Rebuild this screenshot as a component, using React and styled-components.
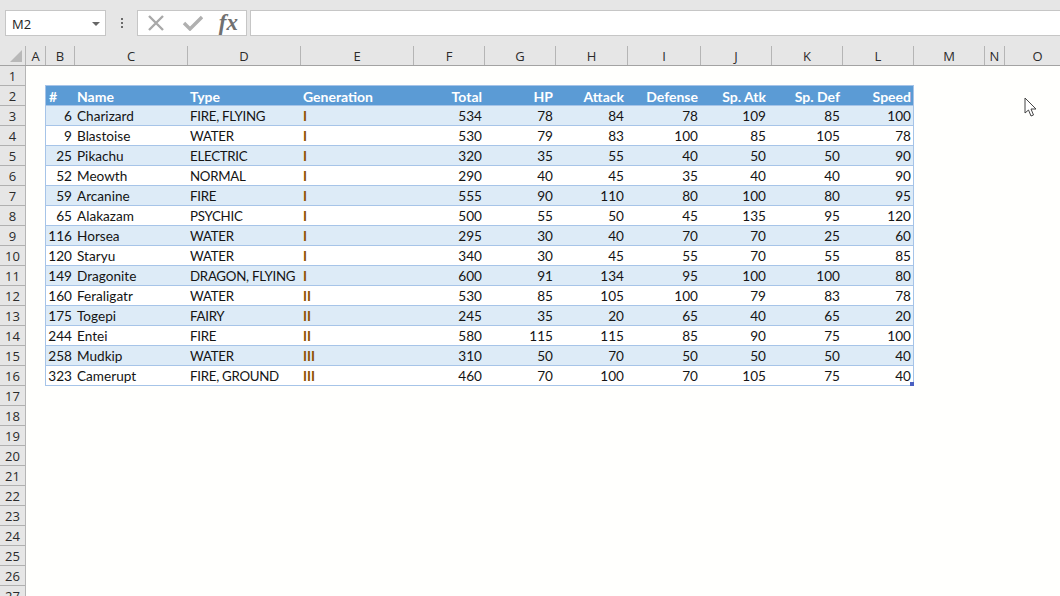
import React from 'react';
import styled, { createGlobalStyle } from 'styled-components';

const GlobalStyle = createGlobalStyle`
  html, body {
    margin: 0;
    padding: 0;
    height: 100%;
    overflow: hidden;
    background: #fffffd;
  }
`;

const COLUMNS = [
  { name: 'A', width: 20 },
  { name: 'B', width: 29 },
  { name: 'C', width: 113 },
  { name: 'D', width: 113 },
  { name: 'E', width: 113 },
  { name: 'F', width: 71 },
  { name: 'G', width: 71 },
  { name: 'H', width: 72 },
  { name: 'I', width: 73 },
  { name: 'J', width: 71 },
  { name: 'K', width: 71 },
  { name: 'L', width: 71 },
  { name: 'M', width: 71 },
  { name: 'N', width: 20 },
  { name: 'O', width: 66 },
];

const HEADERS = ['#', 'Name', 'Type', 'Generation', 'Total', 'HP', 'Attack', 'Defense', 'Sp. Atk', 'Sp. Def', 'Speed'];

const POKEMON = [
  [6, 'Charizard', 'FIRE, FLYING', 'I', 534, 78, 84, 78, 109, 85, 100],
  [9, 'Blastoise', 'WATER', 'I', 530, 79, 83, 100, 85, 105, 78],
  [25, 'Pikachu', 'ELECTRIC', 'I', 320, 35, 55, 40, 50, 50, 90],
  [52, 'Meowth', 'NORMAL', 'I', 290, 40, 45, 35, 40, 40, 90],
  [59, 'Arcanine', 'FIRE', 'I', 555, 90, 110, 80, 100, 80, 95],
  [65, 'Alakazam', 'PSYCHIC', 'I', 500, 55, 50, 45, 135, 95, 120],
  [116, 'Horsea', 'WATER', 'I', 295, 30, 40, 70, 70, 25, 60],
  [120, 'Staryu', 'WATER', 'I', 340, 30, 45, 55, 70, 55, 85],
  [149, 'Dragonite', 'DRAGON, FLYING', 'I', 600, 91, 134, 95, 100, 100, 80],
  [160, 'Feraligatr', 'WATER', 'II', 530, 85, 105, 100, 79, 83, 78],
  [175, 'Togepi', 'FAIRY', 'II', 245, 35, 20, 65, 40, 65, 20],
  [244, 'Entei', 'FIRE', 'II', 580, 115, 115, 85, 90, 75, 100],
  [258, 'Mudkip', 'WATER', 'III', 310, 50, 70, 50, 50, 50, 40],
  [323, 'Camerupt', 'FIRE, GROUND', 'III', 460, 70, 100, 70, 105, 75, 40],
];

// table cells don't sit exactly under the header strip in the capture
const TABLE_TEMPLATE = '28px 113px 113px 113px 71px 71px 71px 74px 68px 74px 71px';
const ROW_NUMBERS = Array.from({ length: 27 }, (_, i) => i + 1);

const Page = styled.div`
  width: 1060px;
  height: 596px;
  overflow: hidden;
  background: #fffffd;
  font-family: "Lato", "Liberation Sans", sans-serif;
`;

const FormulaBar = styled.div`
  height: 46px;
  box-sizing: border-box;
  padding: 10px 0 10px 5px;
  background: #e6e6e6;
  display: flex;
  align-items: stretch;
`;

const NameBox = styled.div`
  width: 101px;
  box-sizing: border-box;
  background: #fff;
  border: 1px solid #c6c6c6;
  display: flex;
  align-items: center;
  justify-content: space-between;
  padding: 1px 5px 0 6px;
  font-family: "Open Sans", sans-serif;
  font-size: 13px;
  color: #222;
`;

const Caret = styled.span`
  width: 0;
  height: 0;
  border-left: 4px solid transparent;
  border-right: 4px solid transparent;
  border-top: 4px solid #666;
`;

const Grip = styled.div`
  width: 31px;
  display: flex;
  flex-direction: column;
  align-items: center;
  justify-content: center;
  gap: 2px;
`;

const GripDot = styled.span`
  width: 2px;
  height: 2px;
  background: #6a6a6a;
`;

const ActionBox = styled.div`
  width: 110px;
  box-sizing: border-box;
  background: #fff;
  border: 1px solid #c6c6c6;
  display: flex;
  align-items: center;
  justify-content: space-between;
  padding: 0 8px 0 9px;
`;

const FxLabel = styled.span`
  font-family: "Liberation Serif", serif;
  font-style: italic;
  font-weight: 700;
  font-size: 23px;
  line-height: 1;
  color: #707070;
  position: relative;
  top: -1px;
`;

const FormulaInput = styled.div`
  flex: 1;
  margin-left: 3px;
  background: #fff;
  border: 1px solid #c6c6c6;
  border-right: none;
`;

const ColumnStrip = styled.div`
  display: flex;
  height: 20px;
  box-sizing: border-box;
  background: #e6e6e6;
  border-bottom: 1px solid #a3a3a3;
`;

const Corner = styled.div`
  width: 26px;
  flex: none;
  box-sizing: border-box;
  border-right: 1px solid #b5b5b5;
  display: flex;
  align-items: flex-end;
  justify-content: flex-end;
  padding: 0 3px 3px 0;
`;

const CornerMark = styled.span`
  width: 0;
  height: 0;
  border-left: 12px solid transparent;
  border-bottom: 12px solid #b8b8b8;
`;

const ColumnLabel = styled.div`
  flex: none;
  width: ${({ $width }) => $width}px;
  box-sizing: border-box;
  border-right: 1px solid #b5b5b5;
  text-align: center;
  font-family: "Open Sans", sans-serif;
  font-size: 13px;
  line-height: 21px;
  color: #2b2b2b;
`;

const SheetBody = styled.div`
  display: flex;
  align-items: flex-start;
`;

const RowStrip = styled.div`
  width: 26px;
  flex: none;
  box-sizing: border-box;
  background: #e6e6e6;
  border-right: 1px solid #b5b5b5;
`;

const RowLabel = styled.div`
  height: 20px;
  box-sizing: border-box;
  border-bottom: 1px solid #b0b0b0;
  text-align: center;
  font-family: "Open Sans", sans-serif;
  font-size: 13px;
  line-height: 21px;
  color: #2b2b2b;
`;

const Sheet = styled.div`
  flex: 1;
  padding: 19px 0 0 19px;
`;

const Table = styled.div`
  position: relative;
  width: 869px;
  box-sizing: border-box;
  border: 1px solid #a6c4e8;
  border-bottom: none;
`;

const TableRow = styled.div`
  display: grid;
  grid-template-columns: ${TABLE_TEMPLATE};
  height: 20px;
  box-sizing: border-box;
  align-items: start;
  background: ${({ $striped }) => ($striped ? '#ddebf7' : '#fff')};
  border-bottom: 1px solid #a6c4e8;
`;

const HeaderRow = styled(TableRow)`
  background: #5b9bd5;
`;

const Cell = styled.div`
  padding: 0 ${({ $right }) => ($right ? '2px' : '0')} 0 ${({ $right }) => ($right ? '0' : '3px')};
  text-align: ${({ $right }) => ($right ? 'right' : 'left')};
  font-size: 13.6px;
  line-height: 20px;
  white-space: nowrap;
  color: #141414;
`;

const HeaderCell = styled(Cell)`
  color: #fff;
  font-weight: 700;
  font-size: 14px;
  line-height: 21px;
`;

const TypeCell = styled(Cell)`
  font-size: 13.3px;
  letter-spacing: -0.28px;
`;

const GenerationCell = styled(Cell)`
  color: #8f4f00;
  font-weight: 700;
`;

const ResizeHandle = styled.span`
  position: absolute;
  right: -1px;
  bottom: 0;
  width: 4px;
  height: 4px;
  background: #4a5fc1;
`;

const Pointer = styled.svg`
  position: absolute;
  left: 1024px;
  top: 97px;
`;

const App = () => {
  return (
    <Page>
      <GlobalStyle />
      <FormulaBar>
        <NameBox>
          M2
          <Caret />
        </NameBox>
        <Grip>
          <GripDot />
          <GripDot />
          <GripDot />
        </Grip>
        <ActionBox>
          <svg width="18" height="16" viewBox="0 0 18 16">
            <path d="M2 1 L16 15 M16 1 L2 15" stroke="#a9a9a9" strokeWidth="2.4" fill="none" />
          </svg>
          <svg width="22" height="16" viewBox="-2 0 22 16">
            <path d="M1 8 L7 14 L19 2" stroke="#b0b0b0" strokeWidth="3.4" fill="none" />
          </svg>
          <FxLabel>fx</FxLabel>
        </ActionBox>
        <FormulaInput />
      </FormulaBar>
      <ColumnStrip>
        <Corner>
          <CornerMark />
        </Corner>
        {COLUMNS.map((col) => (
          <ColumnLabel key={col.name} $width={col.width}>
            {col.name}
          </ColumnLabel>
        ))}
      </ColumnStrip>
      <SheetBody>
        <RowStrip>
          {ROW_NUMBERS.map((n) => (
            <RowLabel key={n}>{n}</RowLabel>
          ))}
        </RowStrip>
        <Sheet>
          <Table>
            <HeaderRow>
              {HEADERS.map((h, i) => (
                <HeaderCell key={h} $right={i >= 4}>
                  {h}
                </HeaderCell>
              ))}
            </HeaderRow>
            {POKEMON.map((row, r) => (
              <TableRow key={row[0]} $striped={r % 2 === 0}>
                {row.map((value, i) => {
                  if (i === 2) return <TypeCell key={i}>{value}</TypeCell>;
                  if (i === 3) return <GenerationCell key={i}>{value}</GenerationCell>;
                  return (
                    <Cell key={i} $right={typeof value === 'number'}>
                      {value}
                    </Cell>
                  );
                })}
              </TableRow>
            ))}
            <ResizeHandle />
          </Table>
        </Sheet>
      </SheetBody>
      <Pointer width="14" height="22" viewBox="0 0 14 22">
        <path
          d="M1 1 L1 16 L4.5 13 L7 19 L9.5 18 L7 12 L12 12 Z"
          fill="#fff"
          stroke="#444"
          strokeWidth="1"
          strokeLinejoin="round"
        />
      </Pointer>
    </Page>
  );
};

export default App;
